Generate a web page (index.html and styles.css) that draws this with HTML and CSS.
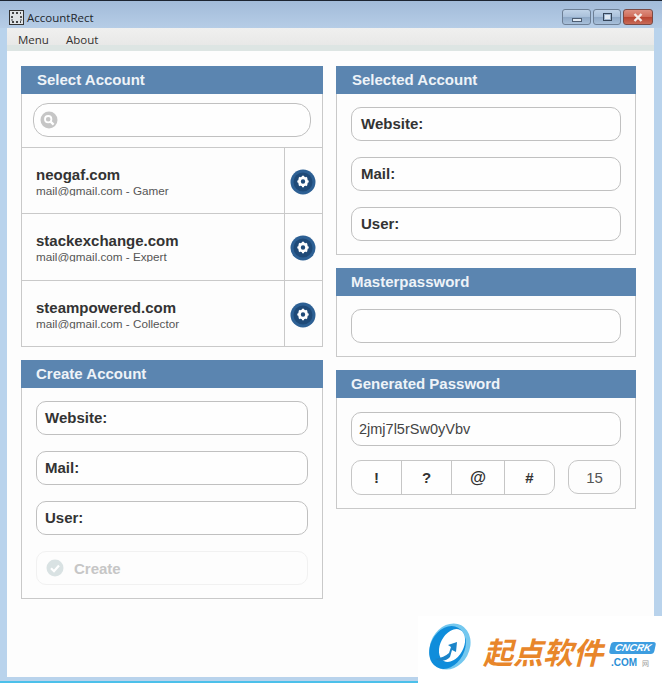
FILE: index.html
```html
<!DOCTYPE html>
<html lang="en">
<head>
<meta charset="utf-8">
<title>AccountRect</title>
<link rel="stylesheet" href="styles.css">
</head>
<body>
<div class="window">
  <header class="titlebar">
    <svg class="app-icon" width="15" height="15" viewBox="0 0 15 15"><rect x="0.5" y="0.5" width="14" height="14" fill="#dfe3e6" stroke="#333"/><path d="M3 3h2M7 3h2M11 3h1M3 12h2M7 12h2M11 12h1M3 6v2M12 6v2M3 9.500v1M12 9.500v1" stroke="#111" stroke-width="1.400"/></svg>
    <span class="app-title">AccountRect</span>
    <div class="controls">
      <div class="ctl ctl-min"><span class="glyph-min"></span></div>
      <div class="ctl ctl-max"><span class="glyph-max"></span></div>
      <div class="ctl ctl-close">
        <svg width="12" height="9" viewBox="0 0 12 9"><path d="M2.500 1l7 7M9.500 1l-7 7" stroke="#f4ece8" stroke-width="2.400"/></svg>
      </div>
    </div>
  </header>
  <nav class="menubar"><span>Menu</span><span>About</span></nav>
  <main class="content">
    <div class="col col-left">
      <section class="panel panel-select">
        <h2 class="panel-head head-wide">Select Account</h2>
        <div class="search-wrap">
          <div class="search">
            <svg width="18" height="18" viewBox="0 0 18 18"><circle cx="9" cy="9" r="8.500" fill="#c6c6c6"/><circle cx="8.200" cy="8.200" r="3.200" fill="none" stroke="#fff" stroke-width="1.800"/><path d="M10.600 10.600l3 3" stroke="#fff" stroke-width="2.200"/></svg>
          </div>
        </div>
        <ul class="accounts">
          <li class="account">
            <div class="account-info"><div class="site">neogaf.com</div><div class="meta">mail@gmail.com - Gamer</div></div>
            <div class="account-action"><svg class="gear" width="26" height="26" viewBox="0 0 26 26"><use href="#gear"/></svg></div>
          </li>
          <li class="account">
            <div class="account-info"><div class="site">stackexchange.com</div><div class="meta">mail@gmail.com - Expert</div></div>
            <div class="account-action"><svg class="gear" width="26" height="26" viewBox="0 0 26 26"><use href="#gear"/></svg></div>
          </li>
          <li class="account">
            <div class="account-info"><div class="site">steampowered.com</div><div class="meta">mail@gmail.com - Collector</div></div>
            <div class="account-action"><svg class="gear" width="26" height="26" viewBox="0 0 26 26"><use href="#gear"/></svg></div>
          </li>
        </ul>
      </section>
      <section class="panel">
        <h2 class="panel-head">Create Account</h2>
        <div class="form form-create">
          <div class="field">Website:</div>
          <div class="field">Mail:</div>
          <div class="field">User:</div>
          <div class="create">
            <svg width="18" height="18" viewBox="0 0 18 18"><circle cx="9" cy="9" r="8.500" fill="#d9e2e3"/><path d="M5 9.200l3 3 5-5.600" fill="none" stroke="#fff" stroke-width="2.200"/></svg>
            <span>Create</span>
          </div>
        </div>
      </section>
    </div>
    <div class="col col-right">
      <section class="panel">
        <h2 class="panel-head head-selected">Selected Account</h2>
        <div class="form form-selected">
          <div class="field">Website:</div>
          <div class="field">Mail:</div>
          <div class="field">User:</div>
        </div>
      </section>
      <section class="panel">
        <h2 class="panel-head">Masterpassword</h2>
        <div class="form form-master"><div class="field"></div></div>
      </section>
      <section class="panel">
        <h2 class="panel-head">Generated Password</h2>
        <div class="form form-generated">
          <div class="field field-plain">2jmj7l5rSw0yVbv</div>
          <div class="options">
            <div class="symbols">
              <div class="sym sym-1">!</div>
              <div class="sym sym-2">?</div>
              <div class="sym sym-3">@</div>
              <div class="sym sym-4">#</div>
            </div>
            <div class="count">15</div>
          </div>
        </div>
      </section>
    </div>
  </main>
  <div class="frame-bottom"></div>
</div>
<aside class="watermark">
  <svg class="wm-logo" width="47" height="50" viewBox="0 0 47 50">
    <ellipse cx="24" cy="24.500" rx="19.500" ry="24" transform="rotate(28 24 24.500)" fill="#74c8ef"/>
    <ellipse cx="21.500" cy="25.500" rx="17" ry="22.500" transform="rotate(28 21.500 25.500)" fill="#0f8ddb"/>
    <ellipse cx="26" cy="23.500" rx="11.500" ry="17.500" transform="rotate(28 26 23.500)" fill="#fff"/>
    <path d="M9 37c5 3 12 2 15-2l2-7 4 2 1-10-9 3 3 2-2 6c-3 3-8 5-14 6z" fill="#1a84c9"/>
  </svg>
  <span class="wm-cn">起点软件</span>
  <div class="wm-side">
    <span class="wm-badge">CNCRK</span>
    <span class="wm-com">.COM <small>网</small></span>
  </div>
</aside>
<svg class="defs" width="0" height="0">
  <defs>
    <g id="gear">
      <circle cx="13" cy="13" r="12.500" fill="#2d6094"/>
      <circle cx="13" cy="13" r="9.500" fill="#1f4a78"/>
      <circle cx="13" cy="12.500" r="3.600" fill="none" stroke="#fff" stroke-width="2.800"/>
      <path d="M13 6.800v2M13 16.200v2M7.300 12.500h2M16.700 12.500h2M9 8.500l1.400 1.400M15.600 15.100l1.400 1.400M17 8.500l-1.400 1.400M10.400 15.100L9 16.500" stroke="#fff" stroke-width="2"/>
    </g>
  </defs>
</svg>
</body>
</html>
```
FILE: styles.css
```css
* { box-sizing: border-box; }
html, body { margin: 0; padding: 0; }
body {
  width: 662px;
  height: 683px;
  overflow: hidden;
  position: relative;
  font-family: "Liberation Sans", Arial, sans-serif;
  background: #b9d3ec;
}
.window {
  height: 683px;
  display: flex;
  flex-direction: column;
  border-top: 1px solid #1c2430;
  background: #b9d3ec;
  padding: 0 8px 0 7px;
}
.titlebar {
  height: 27px;
  margin: 0 -8px 0 -7px;
  padding: 5px 9px 0 9px;
  display: flex;
  align-items: center;
  background: linear-gradient(#a2bbd9, #b6cde6);
}
.app-icon { flex: none; margin-right: 3px; }
.app-title {
  font: 11.500px "Open Sans", sans-serif;
  color: #22262c;
}
.controls {
  margin-left: auto;
  display: flex;
  gap: 2px;
  align-items: flex-start;
  height: 16px;
}
.ctl {
  height: 16px;
  border: 1px solid #6d7f95;
  border-radius: 3px;
  display: flex;
  align-items: center;
  justify-content: center;
  background: linear-gradient(#c0d3e8 0, #a9c0da 50%, #8fa9c7 51%, #a8c0da 100%);
}
.ctl-min { width: 29px; }
.ctl-max { width: 28px; }
.ctl-close { width: 30px; background: linear-gradient(#dd8f80 0, #cf6b58 50%, #b8432f 51%, #c86b58 100%); border-color: #7a4a44; }
.glyph-min { width: 10px; height: 4px; margin-top: 5px; background: #dfe8f2; border: 1px solid #4e5e73; }
.glyph-max { width: 9px; height: 8px; background: #dfe8f2; border: 1px solid #36465a; box-shadow: inset 0 0 0 1px #9fb6d0; }
.menubar {
  height: 23px;
  padding: 0 0 0 11px;
  display: flex;
  gap: 17px;
  align-items: center;
  font: 11.500px "Open Sans", sans-serif;
  color: #33312f;
  background: linear-gradient(#f0f0ef 0, #e8e8e7 75%, #dde5e3 76%, #dde5e3 100%);
}
.content {
  flex: 1;
  min-height: 0;
  background: #fdfdfd;
  padding: 15px 18px 0 14px;
  display: flex;
  gap: 13px;
  align-items: flex-start;
}
.col { display: flex; flex-direction: column; gap: 13px; }
.col-left { width: 302px; }
.col-right { width: 300px; }
.panel {
  border: 1px solid #c9c9c9;
  border-top: none;
  background: #fdfdfd;
}
.panel-head {
  margin: 0 -1px;
  height: 28px;
  padding: 0 0 1px 15px;
  display: flex;
  align-items: center;
  background: #5b85b0;
  color: #eef3f8;
  font-size: 15px;
  font-weight: bold;
}
.head-wide { padding-left: 16px; }
.head-selected { padding-left: 16px; }
.search-wrap { padding: 9px 11px 10px; }
.search {
  height: 34px;
  border: 1px solid #c0c0c0;
  border-radius: 15px;
  padding-left: 6px;
  display: flex;
  align-items: center;
  background: #fefefe;
}
.accounts { list-style: none; margin: 0; padding: 0; }
.account {
  height: 66px;
  display: flex;
  border-top: 1px solid #c9c9c9;
}
.account:nth-child(2) { height: 67px; }
.account-info { flex: 1; padding: 19px 0 0 14px; }
.site { font-size: 15px; font-weight: bold; color: #333; line-height: 16px; }
.meta { font-size: 11.700px; color: #555; line-height: 13px; margin-top: 1px; height: 12px; overflow: hidden; }
.account-action {
  width: 38px;
  flex: none;
  border-left: 1px solid #c9c9c9;
  display: flex;
  align-items: center;
  justify-content: center;
  padding: 2px 2px 0 0;
}
.gear { display: block; }
.form { display: flex; flex-direction: column; gap: 16px; }
.form-create { padding: 13px 14px; }
.form-selected { padding: 13px 14px; }
.form-selected .field { padding-left: 9px; }
.form-master { padding: 13px 14px; }
.form-generated { padding: 14px 14px 13px; gap: 14px; }
.field {
  height: 34px;
  border: 1px solid #c0c0c0;
  border-radius: 10px;
  padding: 0 0 1px 8px;
  display: flex;
  align-items: center;
  background: #fefefe;
  font-size: 15px;
  font-weight: bold;
  color: #333;
}
.field-plain { font-weight: normal; font-size: 14.500px; padding-left: 7px; color: #444; }
.create {
  height: 34px;
  border: 1px solid #f1f1f1;
  border-radius: 10px;
  padding-left: 9px;
  display: flex;
  align-items: center;
  gap: 10px;
  font-size: 15px;
  font-weight: bold;
  color: #c6c6c6;
}
.options { display: flex; justify-content: space-between; }
.symbols {
  width: 204px;
  height: 35px;
  display: flex;
  border: 1px solid #c6c6c6;
  border-radius: 10px;
  background: #fefefe;
}
.sym {
  display: flex;
  align-items: center;
  justify-content: center;
  font-size: 15px;
  font-weight: bold;
  color: #333;
  border-left: 1px solid #c6c6c6;
}
.sym:first-child { border-left: none; }
.sym-1 { width: 49px; }
.sym-2 { width: 50px; }
.sym-3 { width: 53px; font-size: 16.500px; }
.sym-4 { flex: 1; }
.count {
  width: 53px;
  height: 34px;
  border: 1px solid #c6c6c6;
  border-radius: 10px;
  display: flex;
  align-items: center;
  justify-content: center;
  font-size: 15px;
  color: #555;
}
.frame-bottom {
  height: 6px;
  margin: 0 -8px 0 -7px;
  background: linear-gradient(#b9d3ec 0, #b9d3ec 66%, #4cc0ea 67%);
}
.watermark {
  position: absolute;
  left: 418px;
  top: 616px;
  width: 244px;
  height: 67px;
  background: #fff;
  display: flex;
  align-items: flex-start;
  padding-left: 8px;
}
.wm-logo { margin-top: 6px; flex: none; }
.wm-cn {
  margin: 20px 0 0 10px;
  font: italic bold 30px "Noto Sans CJK SC", sans-serif;
  color: #e8862a;
  white-space: nowrap;
  line-height: 1;
}
.wm-side { margin: 26px 0 0 7px; display: flex; flex-direction: column; align-items: flex-start; }
.wm-badge {
  background: #3d9de0;
  color: #fff;
  font: italic bold 10px "Liberation Sans", sans-serif;
  line-height: 10px;
  padding: 1px 4px 1px 5px;
  border-radius: 3px;
  transform: skewX(-12deg);
}
.wm-com { margin: 3px 0 0 1px; font: bold 10px "Liberation Sans", sans-serif; color: #2b8fd6; white-space: nowrap; }
.wm-com small { font: 7px "Noto Sans CJK SC", sans-serif; color: #999; margin-left: 2px; }
.defs { position: absolute; }
```
